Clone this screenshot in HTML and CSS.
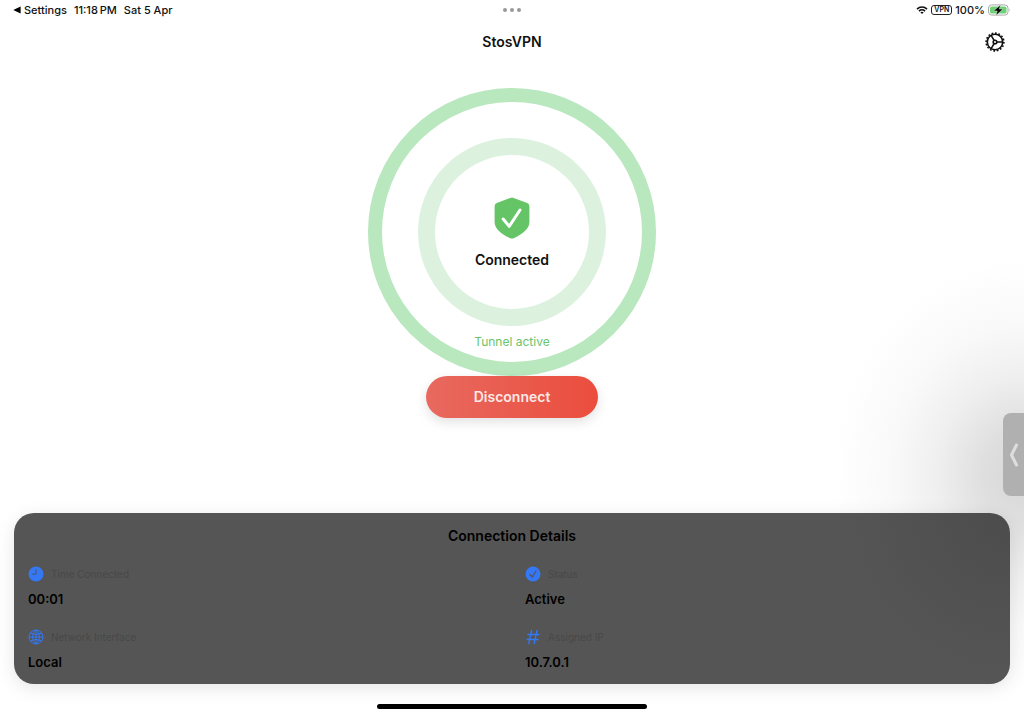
FILE: index.html
```html
<!DOCTYPE html>
<html lang="en">
<head>
<meta charset="utf-8">
<meta name="viewport" content="width=device-width, initial-scale=1">
<title>StosVPN</title>
<link rel="stylesheet" href="styles.css">
</head>
<body>
<div class="app">
  <header class="status-bar">
    <div class="status-left">
      <a class="back-link" href="#"><svg class="back-arrow" viewBox="0 0 8 8" aria-hidden="true"><path d="M0.3 4 7.6 0.6V7.4Z"/></svg>Settings</a>
      <span>11:18&#8201;PM</span>
      <span>Sat 5 Apr</span>
    </div>
    <div class="dots" aria-hidden="true"><i></i><i></i><i></i></div>
    <div class="status-right">
      <svg class="wifi" viewBox="0 0 24 18" aria-hidden="true"><path d="M2 7.2C7.500 1.600 16.500 1.600 22 7.200" /><path d="M6 11.200C9.400 7.900 14.600 7.900 18 11.200"/><path class="wifi-dot" d="M8.600 13.700Q12 10.900 15.400 13.700L12 17.200Z"/></svg>
      <span class="vpn-badge">VPN</span>
      <span class="percent">100%</span>
      <svg class="battery" viewBox="0 0 23 12" aria-hidden="true"><rect x="0.500" y="0.900" width="19.500" height="10.200" rx="3.200" fill="#fff" stroke="#a9a9a9"/><rect x="2" y="2.400" width="16.500" height="7.200" rx="1.900" fill="#6bd174"/><path d="M21.200 4.400Q22.800 6 21.200 7.600Z" fill="#a9a9a9"/><path d="M12.600 0.800 5.600 6.900H9.300L7.900 11.500 15 5.100H11.200Z" fill="#000" stroke="#fff" stroke-width="0.400"/></svg>
    </div>
  </header>

  <nav class="nav-bar">
    <h1 class="title">StosVPN</h1>
    <button class="gear-button" type="button" aria-label="Settings">
      <svg viewBox="0 0 22 22" aria-hidden="true"><circle class="gear-teeth" cx="11" cy="11" r="8.900" pathLength="96"/><circle class="gear-line" cx="11" cy="11" r="7.700"/><circle class="gear-line" cx="11" cy="11" r="1.800"/><path class="gear-line" d="M12.800 11H18.800M10.100 9.400 7.100 4.300M10.100 12.600 7.100 17.700"/></svg>
    </button>
  </nav>

  <main class="content">
    <section class="connection">
      <div class="outer-ring">
        <div class="inner-ring">
          <svg class="shield" viewBox="0 0 36 42" aria-hidden="true"><path fill="#64c466" d="M16.300 0.900Q18 0.100 19.700 0.900L33.200 6Q35.400 6.900 35.400 9.200V25C35.400 32 28 37.500 19.800 41.200Q18 42 16.200 41.200C8 37.500 0.600 32 0.600 25V9.200Q0.600 6.900 2.800 6Z"/><path class="shield-check" d="M9.200 22 15.200 29.300 26 13"/></svg>
          <p class="state">Connected</p>
        </div>
        <p class="tunnel">Tunnel active</p>
      </div>
      <button class="disconnect" type="button">Disconnect</button>
    </section>

    <section class="details">
      <h2 class="details-title">Connection Details</h2>
      <dl class="grid">
        <div class="item">
          <dt class="label"><svg class="icon" viewBox="0 0 16 16" aria-hidden="true"><circle cx="8" cy="8" r="7.500" fill="#3478f6"/><path d="M8 3.300V8.200H4.300" fill="none" stroke="#555" stroke-width="1"/></svg>Time Connected</dt>
          <dd class="value">00:01</dd>
        </div>
        <div class="item">
          <dt class="label"><svg class="icon" viewBox="0 0 16 16" aria-hidden="true"><circle cx="8" cy="8" r="7.500" fill="#3478f6"/><path d="M5 8.500 7.200 11.100 11 5" fill="none" stroke="#555" stroke-width="1.200" stroke-linecap="round" stroke-linejoin="round"/></svg>Status</dt>
          <dd class="value">Active</dd>
        </div>
        <div class="item">
          <dt class="label"><svg class="icon line-icon" viewBox="0 0 16 16" aria-hidden="true"><circle cx="8" cy="8" r="7"/><path d="M2.500 4.200Q8 7 13.500 4.200M1 8H15M2.500 11.800Q8 9 13.500 11.800M8 1V15M8 1C3.500 4.500 3.500 11.500 8 15M8 1C12.500 4.500 12.500 11.500 8 15"/></svg>Network Interface</dt>
          <dd class="value">Local</dd>
        </div>
        <div class="item">
          <dt class="label"><svg class="icon line-icon" viewBox="0 0 16 16" aria-hidden="true"><path class="hash" d="M6.600 1.500 3.800 14.500M12 1.500 9.200 14.500M3 5.500H14M2 10.500H13"/></svg>Assigned IP</dt>
          <dd class="value">10.7.0.1</dd>
        </div>
      </dl>
    </section>
  </main>

  <div class="home-indicator" aria-hidden="true"></div>
  <button class="side-tab" type="button" aria-label="Show side panel"><svg viewBox="0 0 10 24" aria-hidden="true"><path d="M7.500 2 2.500 12 7.500 22"/></svg></button>
</div>
</body>
</html>
```

FILE: styles.css
```css
* { box-sizing: border-box; }

body {
  margin: 0;
  background: #fff;
  color: #111;
  font-family: Inter, "Liberation Sans", sans-serif;
}

h1, h2, p, dl, dd { margin: 0; }

button {
  border: 0;
  padding: 0;
  background: none;
  font: inherit;
  cursor: pointer;
}

.app {
  position: relative;
  display: flex;
  flex-direction: column;
  min-height: 100vh;
  overflow: hidden;
  background: radial-gradient(ellipse 190px 215px at 100% 475px, #d6d6d6 0%, #dfdfdf 22%, #efefef 46%, #f9f9f9 70%, #fff 100%);
}

.status-bar {
  display: grid;
  grid-template-columns: 1fr auto 1fr;
  align-items: center;
  height: 20px;
  padding: 0 13px;
  font-size: 11px;
  font-weight: 500;
  line-height: 20px;
}

.status-left, .status-right { display: flex; align-items: center; }
.status-left { gap: 7px; }
.status-right { justify-content: flex-end; gap: 3px; }

.back-link {
  display: flex;
  align-items: center;
  gap: 3px;
  color: inherit;
  text-decoration: none;
}

.back-arrow { width: 8px; height: 8px; }

.dots { display: flex; gap: 3px; }
.dots i { width: 4px; height: 4px; border-radius: 50%; background: #999; }

.wifi {
  width: 12px;
  height: 10px;
  fill: none;
  stroke: #111;
  stroke-width: 3;
}
.wifi-dot { fill: #111; stroke: none; }

.vpn-badge {
  padding: 0 2px;
  border: 1px solid #222;
  border-radius: 3px;
  font-size: 7px;
  font-weight: 600;
  line-height: 8px;
}

.battery { width: 23px; height: 12px; }

.nav-bar {
  display: grid;
  grid-template-columns: 1fr auto 1fr;
  align-items: center;
  height: 44px;
  padding: 0 18px;
}

.title {
  grid-column: 2;
  font-size: 14px;
  font-weight: 600;
  line-height: 20px;
}

.gear-button { justify-self: end; width: 22px; height: 22px; }
.gear-button svg { display: block; }
.gear-teeth { fill: none; stroke: #111; stroke-width: 1.6; stroke-dasharray: 3 3; }
.gear-line { fill: none; stroke: #111; stroke-width: 1.6; }

.content {
  display: flex;
  flex: 1;
  flex-direction: column;
  justify-content: space-between;
  gap: 24px;
  padding: 24px 14px 0;
}

.connection { display: flex; flex-direction: column; align-items: center; }

.outer-ring {
  display: flex;
  flex-direction: column;
  align-items: center;
  gap: 6px;
  width: 288px;
  height: 288px;
  padding-top: 36px;
  border: 14px solid #b9e7be;
  border-radius: 50%;
}

.inner-ring {
  display: flex;
  flex-direction: column;
  flex-shrink: 0;
  align-items: center;
  gap: 11px;
  width: 188px;
  height: 188px;
  padding-top: 42px;
  border: 17px solid #dcf2df;
  border-radius: 50%;
}

.shield { width: 36px; height: 42px; }
.shield-check {
  fill: none;
  stroke: #fff;
  stroke-width: 3;
  stroke-linecap: round;
  stroke-linejoin: round;
}

.state { font-size: 14px; font-weight: 600; line-height: 20px; }
.tunnel { color: #68c56d; font-size: 12px; line-height: 20px; }

.disconnect {
  padding: 11px 48px;
  border-radius: 22px;
  background: linear-gradient(90deg, #e8695f, #eb4d3d);
  box-shadow: 0 4px 12px rgba(0, 0, 0, 0.12);
  color: #fbe9e7;
  font-size: 14px;
  font-weight: 600;
  line-height: 20px;
}

.details {
  padding: 13px 14px 12px;
  border-radius: 20px;
  background: radial-gradient(circle 160px at 100% 0, #4c4c4c, #555);
  box-shadow: 0 4px 18px rgba(0, 0, 0, 0.1);
  color: #000;
}

.details-title {
  font-size: 14px;
  font-weight: 600;
  line-height: 20px;
  text-align: center;
}

.grid {
  display: grid;
  grid-template-columns: 1fr 1fr;
  gap: 20px 26px;
  padding-top: 20px;
}

.item { display: flex; flex-direction: column; gap: 7px; }

.label {
  display: flex;
  align-items: center;
  gap: 7px;
  color: #484848;
  font-size: 10px;
  line-height: 16px;
}

.icon { width: 16px; height: 16px; }
.line-icon { fill: none; stroke: #3478f6; stroke-width: 1; }
.hash { stroke-width: 1.3; stroke-linecap: round; }

.value { font-size: 13px; font-weight: 600; line-height: 20px; }

.home-indicator {
  align-self: center;
  width: 270px;
  height: 5px;
  margin: 20px 0 6px;
  border-radius: 3px;
  background: #000;
}

.side-tab {
  position: absolute;
  top: 413px;
  right: 0;
  display: flex;
  align-items: center;
  justify-content: center;
  width: 21px;
  height: 83px;
  border-radius: 8px 0 0 8px;
  background: #b0b0b0;
}
.side-tab svg {
  width: 10px;
  height: 24px;
  fill: none;
  stroke: #dedede;
  stroke-width: 3;
  stroke-linecap: round;
  stroke-linejoin: round;
}
```
